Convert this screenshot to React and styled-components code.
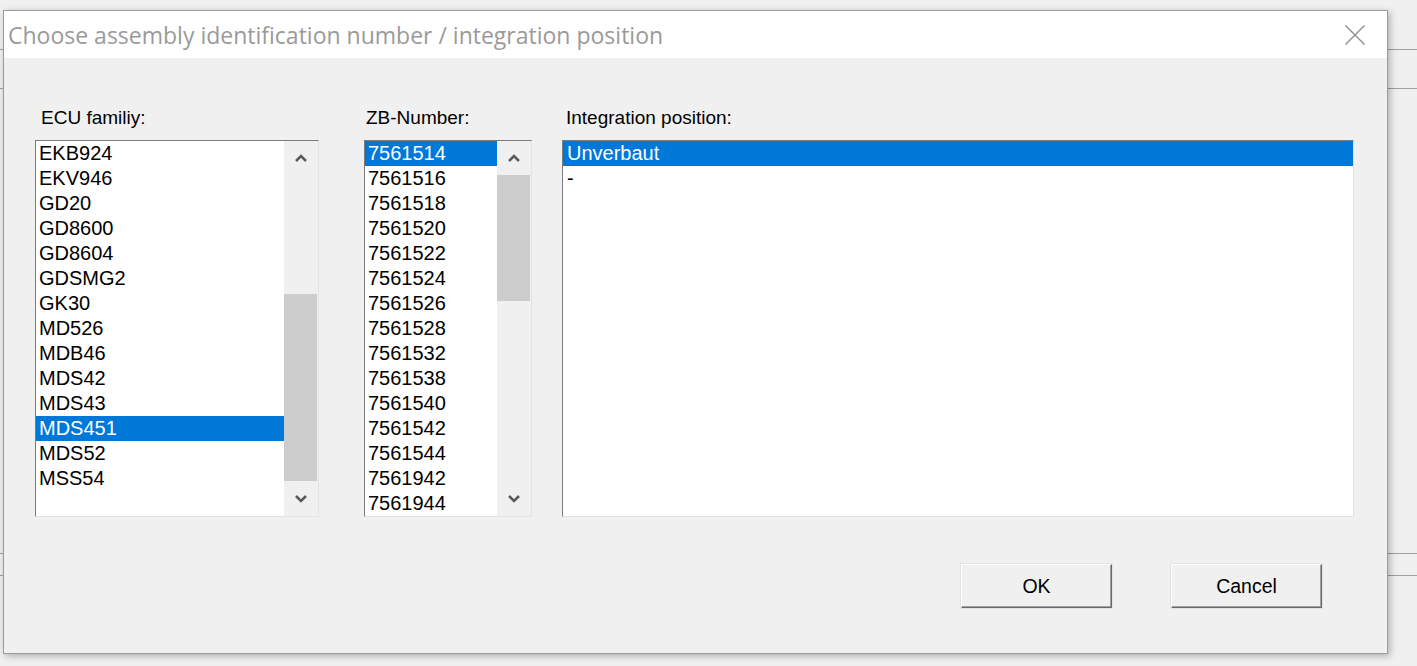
import React from "react";
import styled, { createGlobalStyle } from "styled-components";

const Global = createGlobalStyle`
  html, body { margin: 0; padding: 0; }
  body { background: #f0f0f0; overflow: hidden; }
  #root { width: 1417px; height: 666px; }
`;

const Desktop = styled.div`
  position: relative;
  width: 1417px;
  height: 666px;
  background: #f0f0f0;
  display: flex;
  flex-direction: column;
  overflow: hidden;
`;

const Stripe = styled.div`
  height: ${(p) => p.$h}px;
  flex: none;
  border-bottom: 1px solid #a0a0a0;
`;

const Dialog = styled.div`
  position: absolute;
  left: 3px;
  top: 10px;
  width: 1385px;
  height: 644px;
  box-sizing: border-box;
  border: 1px solid #9c9c9c;
  background: #f0f0f0;
  box-shadow: 2px 2px 7px rgba(0, 0, 0, 0.28);
  display: flex;
  flex-direction: column;
`;

const TitleBar = styled.div`
  height: 47px;
  flex: none;
  background: #ffffff;
  display: flex;
  align-items: center;
  justify-content: space-between;
  padding: 0 22px 0 4px;
`;

const Title = styled.div`
  font-family: "Open Sans", "Noto Sans", sans-serif;
  font-size: 23px;
  color: #9a9a9a;
  white-space: nowrap;
  margin-top: 1px;
`;

const CloseIcon = styled.svg`
  width: 20px;
  height: 20px;
  display: block;
`;

const Body = styled.div`
  flex: 1;
  display: flex;
  flex-direction: column;
  padding: 49px 0 0 31px;
`;

const Columns = styled.div`
  display: flex;
  align-items: flex-start;
`;

const Column = styled.div`
  width: ${(p) => p.$w}px;
  margin-left: ${(p) => p.$gap || 0}px;
  display: flex;
  flex-direction: column;
`;

const Label = styled.div`
  font-family: "Liberation Sans", Arial, sans-serif;
  font-size: 19px;
  line-height: 22px;
  height: 22px;
  color: #000;
  padding-left: ${(p) => p.$inset}px;
  margin-bottom: 11px;
  white-space: nowrap;
`;

const ListBox = styled.div`
  height: 377px;
  box-sizing: border-box;
  border: 1px solid;
  border-color: #7c7c7c #e3e3e3 #e3e3e3 #7c7c7c;
  background: #fff;
  display: flex;
  overflow: hidden;
`;

const Items = styled.div`
  flex: 1;
  min-width: 0;
  display: flex;
  flex-direction: column;
  overflow: hidden;
`;

const Item = styled.div`
  height: 25px;
  flex: none;
  line-height: 25px;
  font-family: "Liberation Sans", Arial, sans-serif;
  font-size: 20px;
  padding-left: ${(p) => p.$pad}px;
  white-space: nowrap;
  color: ${(p) => (p.$selected ? "#ffffff" : "#000000")};
  background: ${(p) => (p.$selected ? "#0078d7" : "transparent")};
`;

const ScrollBar = styled.div`
  width: 34px;
  flex: none;
  background: #f0f0f0;
  display: flex;
  flex-direction: column;
`;

const ArrowButton = styled.div`
  height: 34px;
  flex: none;
  display: flex;
  align-items: center;
  justify-content: center;
`;

const Track = styled.div`
  flex: 1;
  display: flex;
  flex-direction: column;
`;

const Thumb = styled.div`
  flex: none;
  background: #cdcdcd;
  margin: 0 1px 0 0;
`;

const ButtonRow = styled.div`
  display: flex;
  justify-content: flex-end;
  gap: 59px;
  margin-top: 47px;
  padding-right: 65px;
`;

const Button = styled.button`
  width: 151px;
  height: 44px;
  box-sizing: border-box;
  background: #f0f0f0;
  border: 1px solid;
  border-color: #ffffff #696969 #696969 #ffffff;
  box-shadow: inset -1px -1px 0 #a0a0a0;
  outline: 1px solid #e3e3e3;
  outline-offset: 0;
  font-family: "Liberation Sans", Arial, sans-serif;
  font-size: 19.5px;
  color: #000;
  padding: 0;
  cursor: default;
`;

const Chevron = ({ up }) => (
  <svg width="12" height="8" viewBox="0 0 12 8">
    <path
      d={up ? "M1 7 L6 2 L11 7" : "M1 1 L6 6 L11 1"}
      fill="none"
      stroke="#5a5a5a"
      strokeWidth="2.5"
    />
  </svg>
);

function Scroll({ offset, size }) {
  return (
    <ScrollBar>
      <ArrowButton>
        <Chevron up />
      </ArrowButton>
      <Track>
        <div style={{ height: offset, flex: "none" }} />
        <Thumb style={{ height: size }} />
      </Track>
      <ArrowButton>
        <Chevron />
      </ArrowButton>
    </ScrollBar>
  );
}

const ecu = [
  "EKB924", "EKV946", "GD20", "GD8600", "GD8604", "GDSMG2", "GK30",
  "MD526", "MDB46", "MDS42", "MDS43", "MDS451", "MDS52", "MSS54",
];
const zb = [
  "7561514", "7561516", "7561518", "7561520", "7561522", "7561524",
  "7561526", "7561528", "7561532", "7561538", "7561540", "7561542",
  "7561544", "7561942", "7561944",
];
const positions = ["Unverbaut", "-"];

export default function App() {
  return (
    <>
      <Global />
      <Desktop>
        <Stripe $h={49} />
        <Stripe $h={38} />
        <Stripe $h={464} />
        <Stripe $h={21} />
        <Dialog>
          <TitleBar>
            <Title>Choose assembly identification number / integration position</Title>
            <CloseIcon viewBox="0 0 20 20">
              <path d="M0.5 0.5 L19.5 19.5 M19.5 0.5 L0.5 19.5" stroke="#8c8c8c" strokeWidth="1.4" fill="none" />
            </CloseIcon>
          </TitleBar>
          <Body>
            <Columns>
              <Column $w={284}>
                <Label $inset={6}>ECU familiy:</Label>
                <ListBox>
                  <Items>
                    {ecu.map((e) => (
                      <Item key={e} $pad={3} $selected={e === "MDS451"}>{e}</Item>
                    ))}
                  </Items>
                  <Scroll offset={119} size={187} />
                </ListBox>
              </Column>
              <Column $w={168} $gap={45}>
                <Label $inset={2}>ZB-Number:</Label>
                <ListBox>
                  <Items>
                    {zb.map((z, i) => (
                      <Item key={z} $pad={3} $selected={i === 0}>{z}</Item>
                    ))}
                  </Items>
                  <Scroll offset={0} size={126} />
                </ListBox>
              </Column>
              <Column $w={792} $gap={30}>
                <Label $inset={4}>Integration position:</Label>
                <ListBox>
                  <Items>
                    {positions.map((p, i) => (
                      <Item key={p} $pad={4} $selected={i === 0}>{p}</Item>
                    ))}
                  </Items>
                </ListBox>
              </Column>
            </Columns>
            <ButtonRow>
              <Button>OK</Button>
              <Button>Cancel</Button>
            </ButtonRow>
          </Body>
        </Dialog>
      </Desktop>
    </>
  );
}
